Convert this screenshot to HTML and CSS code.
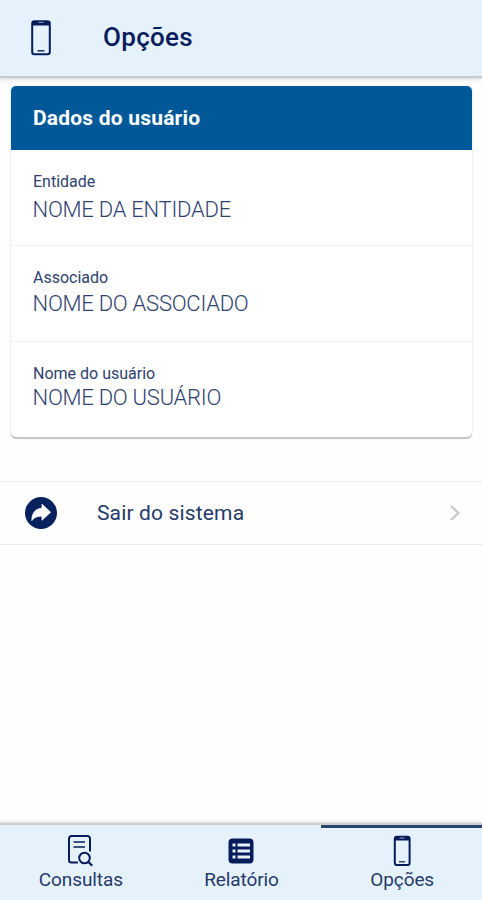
FILE: index.html
```html
<!DOCTYPE html>
<html lang="pt-BR">
<head>
    <meta charset="UTF-8">
    <meta name="viewport" content="width=device-width, initial-scale=1.0">
    <title>Opções</title>
    <link rel="stylesheet" href="styles.css">
</head>
<body>
    <header class="header">
        <svg class="header-icon" viewBox="0 0 20 36">
            <rect x="1.2" y="1.2" width="17.6" height="33" rx="2.2" fill="none" stroke="currentColor" stroke-width="2"/>
            <path d="M1 1.5h18v4H1z" fill="currentColor"/>
            <path d="M7.5 2.3h5" stroke="#9ba6c4" stroke-width="1"/>
            <path d="M6.5 30.8h7" stroke="currentColor" stroke-width="1.4"/>
        </svg>
        <h1>Opções</h1>
    </header>

    <main class="content">
        <section class="card">
            <h2>Dados do usuário</h2>
            <div class="field">
                <span class="label">Entidade</span>
                <span class="value first">NOME DA ENTIDADE</span>
            </div>
            <div class="field">
                <span class="label">Associado</span>
                <span class="value">NOME DO ASSOCIADO</span>
            </div>
            <div class="field">
                <span class="label">Nome do usuário</span>
                <span class="value last">NOME DO USUÁRIO</span>
            </div>
        </section>

        <a class="logout">
            <svg class="logout-icon" viewBox="0 0 32 32">
                <circle cx="16" cy="16" r="16" fill="#07225c"/>
                <path d="M17 7.2 25.6 15.2 17 23.2V19.2C12.6 19 9.3 20 6.9 23.6 6.7 16.5 10.2 11.6 17 11.2Z" fill="#fff" stroke="#fff" stroke-width=".8" stroke-linejoin="round"/>
            </svg>
            <span class="logout-text">Sair do sistema</span>
            <svg class="chevron" viewBox="0 0 10 16">
                <path d="M1 1l7.5 7L1 15" fill="none" stroke="#c6c6c8" stroke-width="2.2"/>
            </svg>
        </a>
    </main>

    <nav class="tabs">
        <a class="tab">
            <svg class="tab-icon" viewBox="0 0 28 32">
                <path d="M12 27.5H5.5a2.5 2.5 0 0 1-2.5-2.5V3.5a2.5 2.5 0 0 1 2.500-2.500h16A2.500 2.500 0 0 1 24 3.500v13" fill="none" stroke="currentColor" stroke-width="2"/>
                <path d="M7.5 7h11.5M7.5 12h11.5" stroke="currentColor" stroke-width="1.7"/>
                <circle cx="18.500" cy="23" r="5.300" fill="none" stroke="currentColor" stroke-width="2"/>
                <path d="M22.200 26.700l4 4" stroke="currentColor" stroke-width="2.200"/>
            </svg>
            <span>Consultas</span>
        </a>
        <a class="tab">
            <svg class="tab-icon" viewBox="0 0 28 32">
                <rect x="1.500" y="3.500" width="25" height="25" rx="4" fill="currentColor"/>
                <path d="M5.500 10h3M5.500 16h3M5.500 22h3M10.500 10h12.500M10.500 16h12.500M10.500 22h12.500" stroke="#e5f2fc" stroke-width="2.800"/>
            </svg>
            <span>Relatório</span>
        </a>
        <a class="tab active">
            <svg class="tab-icon" viewBox="0 0 28 32">
                <rect x="6.800" y="1.800" width="14.800" height="28.200" rx="2" fill="none" stroke="currentColor" stroke-width="2"/>
                <path d="M6.500 2h15.400v3.500H6.500z" fill="currentColor"/>
                <path d="M11.500 3h5" stroke="#9ba6c4" stroke-width="1"/>
                <path d="M11 26.800h6" stroke="currentColor" stroke-width="1.200"/>
            </svg>
            <span>Opções</span>
        </a>
    </nav>
</body>
</html>
```
FILE: styles.css
```css
* {
    box-sizing: border-box;
}

body {
    font-family: Roboto, sans-serif;
    background: #fefefe;
    margin: 0;
    height: 900px;
    display: flex;
    flex-direction: column;
    color: #071c5b; /* Navy */
    overflow: hidden;
}

/* Top bar */
.header {
    display: flex;
    align-items: center;
    height: 76px;
    padding-left: 31px;
    background: #e5f2fc;
    box-shadow: 0 2px 1px #c9cbcd, 0 3px 5px rgba(0, 0, 0, 0.15);
}

.header-icon {
    width: 20px;
    height: 36px;
}

.header h1 {
    margin: 0 0 2px 52px;
    font-size: 26px;
    font-weight: 500;
    line-height: 30px;
    letter-spacing: 0.3px;
}

/* Content */
.content {
    flex: 1;
    padding-top: 10px;
}

.card {
    height: 351px;
    margin: 0 10px 0 11px;
    border-radius: 5px;
    background: #fff;
    box-shadow: 0 2px 1px #c3c3c3, 0 0 2px rgba(0, 0, 0, 0.13);
    overflow: hidden;
}

.card h2 {
    margin: 0;
    height: 64px;
    padding-left: 22px;
    background: #005898; /* Blue */
    color: #fff;
    font-size: 21px;
    font-weight: 700;
    line-height: 65px;
    letter-spacing: 0.2px;
}

.field {
    height: 96px;
    padding: 22px 0 0 22px;
    border-bottom: 1px solid #f0f0f0;
    color: #2e426f;
}

.field:last-child {
    border-bottom: none;
}

.label,
.value {
    display: block;
}

.label {
    font-size: 16px;
    line-height: 20px;
}

.value {
    margin-top: 3px;
    margin-left: -0.5px;
    font-size: 22px;
    font-weight: 300;
    line-height: 26px;
    letter-spacing: -0.25px;
}

.value.first {
    margin-top: 5px;
}

.value.last {
    margin-top: 1px;
}

.logout {
    display: flex;
    align-items: center;
    height: 64px;
    margin-top: 44px;
    padding: 0 22px 0 25px;
    border-top: 1px solid #efefef;
    border-bottom: 1px solid #e8e8e8;
}

.logout-icon {
    width: 32px;
    height: 32px;
}

.logout-text {
    margin-left: 40px;
    color: #263a69;
    font-size: 21px;
    letter-spacing: 0.15px;
}

.chevron {
    width: 10px;
    height: 16px;
    margin-left: auto;
}

/* Bottom tabs */
.tabs {
    display: flex;
    height: 75px;
    background: #e5f2fc;
    box-shadow: 0 -2px 1px #cbcdcf, 0 -3px 4px rgba(0, 0, 0, 0.13);
}

.tab {
    flex: 1;
    display: flex;
    flex-direction: column;
    align-items: center;
    padding-top: 7px;
    border-top: 3px solid transparent;
    font-size: 19px;
    line-height: 24px;
}

.tab span {
    margin-top: 1px;
    padding-left: 1px;
    color: #263a69;
    letter-spacing: -0.1px;
}

.tab.active {
    border-top-color: #28466b;
}

.tab-icon {
    width: 28px;
    height: 32px;
}
```
